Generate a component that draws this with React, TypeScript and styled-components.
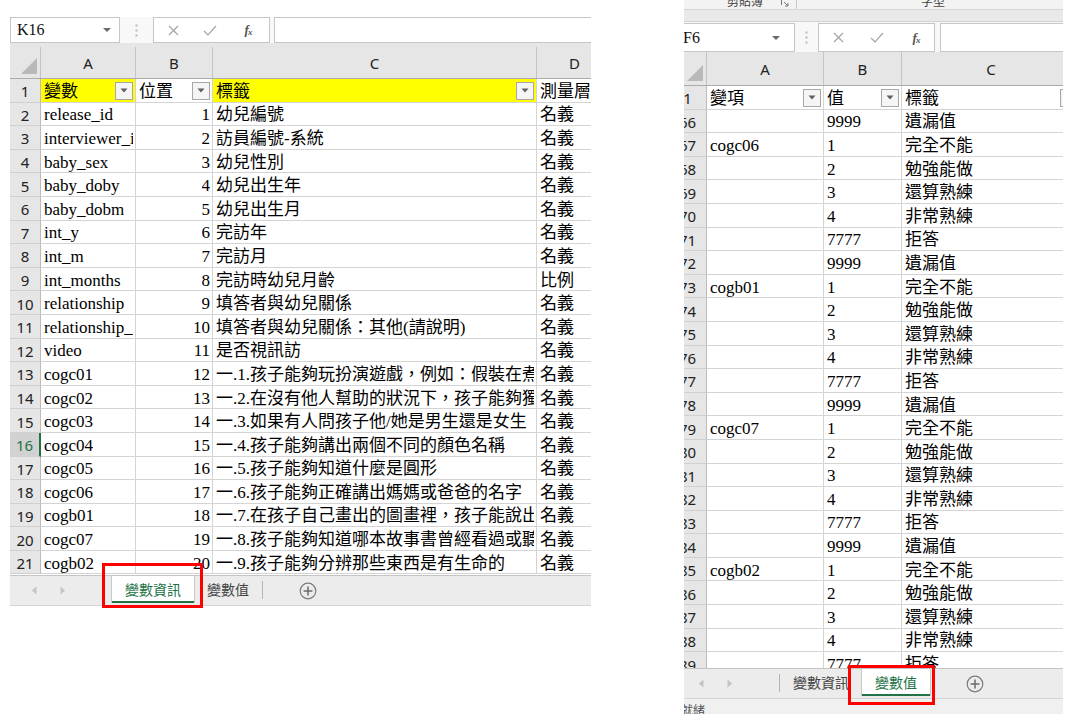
import React from 'react';
import styled, { createGlobalStyle } from 'styled-components';

const CELL_FONT = `"Liberation Serif", "Noto Sans CJK TC", serif`;
const UI_FONT = `"Noto Sans", "Liberation Sans", "Noto Sans CJK TC", sans-serif`;
const CJK_UI = `"Noto Sans CJK TC", "Noto Sans", sans-serif`;
const GREEN = '#217346';

const GlobalStyle = createGlobalStyle`
  * { box-sizing: border-box; }
  html, body { margin: 0; padding: 0; background: #ffffff; }
  body { width: 1078px; height: 720px; overflow: hidden; }
`;

const Page = styled.div`
  display: flex;
  align-items: flex-start;
  width: 1078px;
  height: 720px;
  background: #fff;
`;

const Panel = styled.section<{ $x: number; $y: number; $w: number }>`
  position: relative;
  flex: none;
  margin-left: ${(p) => p.$x}px;
  margin-top: ${(p) => p.$y}px;
  width: ${(p) => p.$w}px;
`;

const Clip = styled.div`
  width: 100%;
  overflow: hidden;
`;

const Inner = styled.div<{ $shift: number }>`
  margin-left: -${(p) => p.$shift}px;
  width: calc(100% + ${(p) => p.$shift}px);
`;

/* ---------- ribbon stub (right panel) ---------- */
const Ribbon = styled.div`
  height: 10px;
  background: #f3f3f3;
  border-bottom: 1px solid #d6d6d6;
  display: flex;
  align-items: flex-end;
  overflow: hidden;
`;

const RibbonLabel = styled.span<{ $ml: number }>`
  flex: none;
  margin-left: ${(p) => p.$ml}px;
  padding-bottom: 2px;
  font: 12px/12px ${CJK_UI};
  color: #444;
`;

const Launcher = styled.span`
  flex: none;
  display: flex;
  margin-left: 18px;
  padding-bottom: 2px;
`;

const GroupSep = styled.span`
  flex: none;
  align-self: stretch;
  width: 1px;
  margin-left: 7px;
  background: #c8c8c8;
`;

const RibbonBand = styled.div`
  height: 12px;
  background: #e9e9e9;
  border-bottom: 1px solid #d2d2d2;
`;

/* ---------- formula bar ---------- */
const FormulaBar = styled.div<{ $h: number; $padTop: number }>`
  display: flex;
  height: ${(p) => p.$h}px;
  padding-top: ${(p) => p.$padTop}px;
  background: #f8f8f8;
`;

const NameBox = styled.div<{ $w: number; $padL: number; $padR: number }>`
  flex: none;
  width: ${(p) => p.$w}px;
  display: flex;
  align-items: center;
  justify-content: space-between;
  padding: 0 ${(p) => p.$padR}px 0 ${(p) => p.$padL}px;
  background: #fff;
  border: 1px solid #c6c6c6;
  font: 16px ${CELL_FONT};
  color: #111;
`;

const DotsArea = styled.div<{ $w: number }>`
  flex: none;
  width: ${(p) => p.$w}px;
  display: flex;
  align-items: center;
  justify-content: center;
`;

const FxBox = styled.div`
  flex: none;
  width: 117px;
  display: flex;
  align-items: center;
  background: #fff;
  border: 1px solid #c6c6c6;
`;

const FxSlot = styled.span<{ $w: number }>`
  flex: none;
  width: ${(p) => p.$w}px;
  display: flex;
  align-items: center;
  justify-content: center;
`;

const FxText = styled.span`
  font: italic bold 13px "Liberation Serif", serif;
  color: #555;
  letter-spacing: -1px;
  sub {
    font-size: 9px;
    vertical-align: -1px;
  }
`;

const FormulaInput = styled.div<{ $ml: number }>`
  flex: 1;
  margin-left: ${(p) => p.$ml}px;
  background: #fff;
  border: 1px solid #c6c6c6;
  border-right: none;
`;

/* ---------- grid ---------- */
const HeaderRow = styled.div<{ $cols: string; $h: number; $padTop: number }>`
  display: grid;
  grid-template-columns: ${(p) => p.$cols};
  height: ${(p) => p.$h}px;
  padding-top: ${(p) => p.$padTop}px;
  background: #e6e6e6;
  border-bottom: 1px solid #ababab;
`;

const Corner = styled.div`
  display: flex;
  align-items: flex-end;
  justify-content: flex-end;
  padding: 0 3px 4px 0;
  border-right: 1px solid #c4c4c4;
`;

const ColHead = styled.div`
  display: flex;
  align-items: center;
  justify-content: center;
  border-right: 1px solid #c4c4c4;
  font: 15px ${UI_FONT};
  color: #222;
  overflow: hidden;
`;

const Body = styled.div<{ $h: number }>`
  height: ${(p) => p.$h}px;
  overflow: hidden;
  background: #fff;
`;

const Row = styled.div<{ $cols: string }>`
  display: grid;
  grid-template-columns: ${(p) => p.$cols};
  height: 23.6px;
`;

const RowHead = styled.div<{ $sel?: boolean }>`
  display: flex;
  align-items: center;
  justify-content: center;
  padding-top: 2px;
  background: ${(p) => (p.$sel ? '#d2d2d2' : '#e6e6e6')};
  color: ${(p) => (p.$sel ? GREEN : '#222')};
  border-bottom: 1px solid #d0d0d0;
  border-right: ${(p) => (p.$sel ? `2px solid ${GREEN}` : '1px solid #bcbcbc')};
  font: 15px ${UI_FONT};
  white-space: nowrap;
  overflow: hidden;
`;

const Cell = styled.div<{ $fill?: string; $align?: 'left' | 'right' }>`
  min-width: 0;
  display: flex;
  align-items: center;
  justify-content: ${(p) => (p.$align === 'right' ? 'flex-end' : 'flex-start')};
  padding: 3px 2px 0 3px;
  background: ${(p) => p.$fill ?? '#fff'};
  border-right: 1px solid #d4d4d4;
  border-bottom: 1px solid #d4d4d4;
  overflow: hidden;
  white-space: nowrap;
  font: 17px/20px ${CELL_FONT};
  color: #000;
`;

const CellText = styled.span`
  flex: 0 1 auto;
  min-width: 0;
  overflow: hidden;
`;

const Spacer = styled.span`
  flex: 1;
`;

const FilterBtn = styled.span`
  flex: none;
  width: 18px;
  height: 18px;
  margin: 0 0 2px 2px;
  display: flex;
  align-items: center;
  justify-content: center;
  background: #f5f5f5;
  border: 1px solid #a8a8a8;
`;

/* ---------- sheet tabs ---------- */
const TabBar = styled.div`
  display: flex;
  align-items: stretch;
  height: 31px;
  background: #ececec;
  border-top: 1px solid #c4c4c4;
  border-bottom: 1px solid #d4d4d4;
`;

const TabNav = styled.div<{ $w: number; $padL: number }>`
  flex: none;
  width: ${(p) => p.$w}px;
  display: flex;
  align-items: center;
  gap: 23px;
  padding-left: ${(p) => p.$padL}px;
`;

const TabSep = styled.span`
  flex: none;
  width: 1px;
  margin: 5px 0 6px;
  background: #b4b4b4;
`;

const SheetTab = styled.div<{ $active?: boolean }>`
  flex: none;
  display: flex;
  align-items: center;
  padding: 0 13px;
  font: 14px ${CJK_UI};
  color: ${(p) => (p.$active ? GREEN : '#444')};
  background: ${(p) => (p.$active ? '#ffffff' : 'transparent')};
  border-bottom: ${(p) => (p.$active ? `2px solid ${GREEN}` : '2px solid transparent')};
  box-shadow: ${(p) => (p.$active ? '1px 0 0 #c8c8c8, -1px 0 0 #c8c8c8' : 'none')};
  margin-bottom: 2px;
`;

const AddSheet = styled.div`
  flex: none;
  display: flex;
  align-items: center;
  margin-left: 36px;
`;

const StatusBar = styled.div<{ $padL: number }>`
  height: 15px;
  padding: 5px 0 0 ${(p) => p.$padL}px;
  background: #f0f0f0;
  font: 12px/12px ${CJK_UI};
  color: #555;
  overflow: hidden;
`;

const LeftFoot = styled.div`
  height: 1px;
`;

const Highlight = styled.div<{ $x: number; $y: number; $w: number; $h: number }>`
  position: absolute;
  left: ${(p) => p.$x}px;
  top: ${(p) => p.$y}px;
  width: ${(p) => p.$w}px;
  height: ${(p) => p.$h}px;
  border: 3px solid #ff0000;
  pointer-events: none;
`;

/* ---------- icons ---------- */
const DropArrow = () => (
  <svg width="8" height="4" viewBox="0 0 8 4">
    <path d="M0 0h8L4 4z" fill="#6a6a6a" />
  </svg>
);

const FilterArrow = () => (
  <svg width="8" height="5" viewBox="0 0 8 5">
    <path d="M0.5 0.5h7L4 4.5z" fill="#5f5f5f" />
  </svg>
);

const Dots = () => (
  <svg width="3" height="13" viewBox="0 0 3 13">
    <rect x="0.5" y="0.5" width="2" height="2" fill="#b8b8b8" />
    <rect x="0.5" y="5.5" width="2" height="2" fill="#b8b8b8" />
    <rect x="0.5" y="10.5" width="2" height="2" fill="#b8b8b8" />
  </svg>
);

const CrossIcon = () => (
  <svg width="11" height="11" viewBox="0 0 11 11">
    <path d="M1 1L10 10M10 1L1 10" stroke="#a4a4a4" strokeWidth="1.2" fill="none" />
  </svg>
);

const CheckIcon = () => (
  <svg width="14" height="11" viewBox="0 0 14 11">
    <path d="M1 6L5 10L13 1" stroke="#a4a4a4" strokeWidth="1.2" fill="none" />
  </svg>
);

const CornerTriangle = () => (
  <svg width="16" height="16" viewBox="0 0 16 16">
    <path d="M16 0V16H0z" fill="#b9b9b9" />
  </svg>
);

const NavLeft = () => (
  <svg width="6" height="9" viewBox="0 0 6 9">
    <path d="M5.5 0.5v8L0.8 4.5z" fill="#c4c4c4" />
  </svg>
);

const NavRight = () => (
  <svg width="6" height="9" viewBox="0 0 6 9">
    <path d="M0.5 0.5v8L5.2 4.5z" fill="#c4c4c4" />
  </svg>
);

const PlusCircle = () => (
  <svg width="18" height="18" viewBox="0 0 18 18">
    <circle cx="9" cy="9" r="7.8" stroke="#7c7c7c" strokeWidth="1.2" fill="none" />
    <path d="M9 4.6v8.8M4.6 9h8.8" stroke="#6a6a6a" strokeWidth="1.5" />
  </svg>
);

const LauncherIcon = () => (
  <svg width="8" height="8" viewBox="0 0 8 8">
    <path d="M0.5 6V0.5H6" stroke="#777" strokeWidth="1" fill="none" />
    <path d="M3 3L7 7M7 4V7H4" stroke="#777" strokeWidth="1" fill="none" />
  </svg>
);

/* ---------- data ---------- */
const leftRows: [number, string, string, string, string][] = [
  [2, 'release_id', '1', '幼兒編號', '名義'],
  [3, 'interviewer_id', '2', '訪員編號-系統', '名義'],
  [4, 'baby_sex', '3', '幼兒性別', '名義'],
  [5, 'baby_doby', '4', '幼兒出生年', '名義'],
  [6, 'baby_dobm', '5', '幼兒出生月', '名義'],
  [7, 'int_y', '6', '完訪年', '名義'],
  [8, 'int_m', '7', '完訪月', '名義'],
  [9, 'int_months', '8', '完訪時幼兒月齡', '比例'],
  [10, 'relationship', '9', '填答者與幼兒關係', '名義'],
  [11, 'relationship_other', '10', '填答者與幼兒關係：其他(請說明)', '名義'],
  [12, 'video', '11', '是否視訊訪', '名義'],
  [13, 'cogc01', '12', '一.1.孩子能夠玩扮演遊戲，例如：假裝在煮飯', '名義'],
  [14, 'cogc02', '13', '一.2.在沒有他人幫助的狀況下，孩子能夠獨立', '名義'],
  [15, 'cogc03', '14', '一.3.如果有人問孩子他/她是男生還是女生', '名義'],
  [16, 'cogc04', '15', '一.4.孩子能夠講出兩個不同的顏色名稱', '名義'],
  [17, 'cogc05', '16', '一.5.孩子能夠知道什麼是圓形', '名義'],
  [18, 'cogc06', '17', '一.6.孩子能夠正確講出媽媽或爸爸的名字', '名義'],
  [19, 'cogb01', '18', '一.7.在孩子自己畫出的圖畫裡，孩子能說出', '名義'],
  [20, 'cogc07', '19', '一.8.孩子能夠知道哪本故事書曾經看過或聽過', '名義'],
  [21, 'cogb02', '20', '一.9.孩子能夠分辨那些東西是有生命的', '名義'],
];

const VALUES = ['1', '2', '3', '4', '7777', '9999'];
const LABELS = ['完全不能', '勉強能做', '還算熟練', '非常熟練', '拒答', '遺漏值'];
const GROUPS: [number, string][] = [
  [67, 'cogc06'],
  [73, 'cogb01'],
  [79, 'cogc07'],
  [85, 'cogb02'],
];

const rightRows: [number, string, string, string][] = (() => {
  const out: [number, string, string, string][] = [[66, '', '9999', '遺漏值']];
  GROUPS.forEach(([start, name]) => {
    VALUES.forEach((v, i) => {
      const n = start + i;
      if (n <= 89) out.push([n, i === 0 ? name : '', v, LABELS[i]]);
    });
  });
  return out;
})();

const LEFT_COLS = '31px 95px 77px 324px 76px';
const RIGHT_COLS = '38px 117px 78px 179px';
const YELLOW = '#ffff00';

/* ---------- panels ---------- */
const LeftSheet = () => (
  <Panel $x={10} $y={17} $w={581}>
    <Clip>
      <Inner $shift={0}>
        <FormulaBar $h={26} $padTop={0}>
          <NameBox $w={110} $padL={6} $padR={8}>
            <span>K16</span>
            <DropArrow />
          </NameBox>
          <DotsArea $w={33}>
            <Dots />
          </DotsArea>
          <FxBox>
            <FxSlot $w={38}>
              <CrossIcon />
            </FxSlot>
            <FxSlot $w={36}>
              <CheckIcon />
            </FxSlot>
            <FxSlot $w={40}>
              <FxText>
                f<sub>x</sub>
              </FxText>
            </FxSlot>
          </FxBox>
          <FormulaInput $ml={4} />
        </FormulaBar>
        <HeaderRow $cols={LEFT_COLS} $h={36} $padTop={4}>
          <Corner>
            <CornerTriangle />
          </Corner>
          <ColHead>A</ColHead>
          <ColHead>B</ColHead>
          <ColHead>C</ColHead>
          <ColHead>D</ColHead>
        </HeaderRow>
        <Body $h={496}>
          <Row $cols={LEFT_COLS}>
            <RowHead>1</RowHead>
            <Cell $fill={YELLOW}>
              <CellText>變數</CellText>
              <Spacer />
              <FilterBtn>
                <FilterArrow />
              </FilterBtn>
            </Cell>
            <Cell>
              <CellText>位置</CellText>
              <Spacer />
              <FilterBtn>
                <FilterArrow />
              </FilterBtn>
            </Cell>
            <Cell $fill={YELLOW}>
              <CellText>標籤</CellText>
              <Spacer />
              <FilterBtn>
                <FilterArrow />
              </FilterBtn>
            </Cell>
            <Cell>
              <CellText>測量層級</CellText>
            </Cell>
          </Row>
          {leftRows.map(([n, a, b, c, d]) => (
            <Row key={n} $cols={LEFT_COLS}>
              <RowHead $sel={n === 16}>{n}</RowHead>
              <Cell>
                <CellText>{a}</CellText>
              </Cell>
              <Cell $align="right">
                <CellText>{b}</CellText>
              </Cell>
              <Cell>
                <CellText>{c}</CellText>
              </Cell>
              <Cell>
                <CellText>{d}</CellText>
              </Cell>
            </Row>
          ))}
        </Body>
        <TabBar>
          <TabNav $w={101} $padL={21}>
            <NavLeft />
            <NavRight />
          </TabNav>
          <TabSep />
          <SheetTab $active>變數資訊</SheetTab>
          <SheetTab>變數值</SheetTab>
          <TabSep />
          <AddSheet>
            <PlusCircle />
          </AddSheet>
        </TabBar>
        <LeftFoot />
      </Inner>
    </Clip>
    <Highlight $x={92} $y={546} $w={101} $h={45} />
  </Panel>
);

const RightSheet = () => (
  <Panel $x={93} $y={0} $w={379}>
    <Clip>
      <Inner $shift={15}>
        <Ribbon>
          <RibbonLabel $ml={58}>剪貼簿</RibbonLabel>
          <Launcher>
            <LauncherIcon />
          </Launcher>
          <GroupSep />
          <RibbonLabel $ml={124}>字型</RibbonLabel>
        </Ribbon>
        <RibbonBand />
        <FormulaBar $h={30} $padTop={1}>
          <NameBox $w={126} $padL={13} $padR={14}>
            <span>F6</span>
            <DropArrow />
          </NameBox>
          <DotsArea $w={23}>
            <Dots />
          </DotsArea>
          <FxBox>
            <FxSlot $w={38}>
              <CrossIcon />
            </FxSlot>
            <FxSlot $w={40}>
              <CheckIcon />
            </FxSlot>
            <FxSlot $w={38}>
              <FxText>
                f<sub>x</sub>
              </FxText>
            </FxSlot>
          </FxBox>
          <FormulaInput $ml={5} />
        </FormulaBar>
        <HeaderRow $cols={RIGHT_COLS} $h={34} $padTop={0}>
          <Corner>
            <CornerTriangle />
          </Corner>
          <ColHead>A</ColHead>
          <ColHead>B</ColHead>
          <ColHead>C</ColHead>
        </HeaderRow>
        <Body $h={582}>
          <Row $cols={RIGHT_COLS}>
            <RowHead>1</RowHead>
            <Cell>
              <CellText>變項</CellText>
              <Spacer />
              <FilterBtn>
                <FilterArrow />
              </FilterBtn>
            </Cell>
            <Cell>
              <CellText>值</CellText>
              <Spacer />
              <FilterBtn>
                <FilterArrow />
              </FilterBtn>
            </Cell>
            <Cell>
              <CellText>標籤</CellText>
              <Spacer />
              <FilterBtn>
                <FilterArrow />
              </FilterBtn>
            </Cell>
          </Row>
          {rightRows.map(([n, a, b, c]) => (
            <Row key={n} $cols={RIGHT_COLS}>
              <RowHead>{n}</RowHead>
              <Cell>
                <CellText>{a}</CellText>
              </Cell>
              <Cell>
                <CellText>{b}</CellText>
              </Cell>
              <Cell>
                <CellText>{c}</CellText>
              </Cell>
            </Row>
          ))}
        </Body>
        <TabBar>
          <TabNav $w={110} $padL={29}>
            <NavLeft />
            <NavRight />
          </TabNav>
          <TabSep />
          <SheetTab>變數資訊</SheetTab>
          <SheetTab $active>變數值</SheetTab>
          <AddSheet>
            <PlusCircle />
          </AddSheet>
        </TabBar>
        <StatusBar $padL={12}>就緒</StatusBar>
      </Inner>
    </Clip>
    <Highlight $x={164} $y={665} $w={87} $h={40} />
  </Panel>
);

export default function App() {
  return (
    <>
      <GlobalStyle />
      <Page>
        <LeftSheet />
        <RightSheet />
      </Page>
    </>
  );
}
